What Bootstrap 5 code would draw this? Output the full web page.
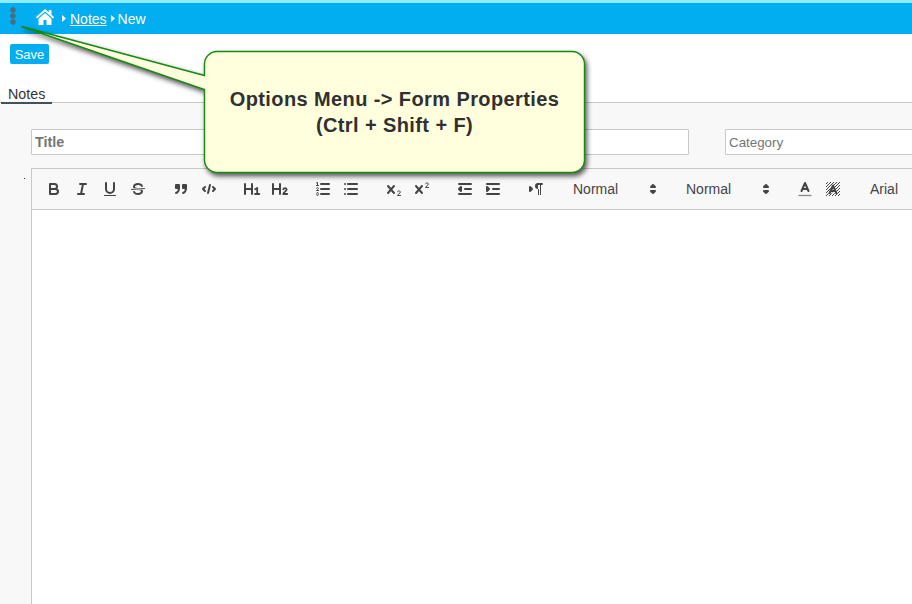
<!DOCTYPE html>
<html lang="en">
<head>
<meta charset="utf-8">
<title>Notes - New</title>
<link href="https://cdn.jsdelivr.net/npm/bootstrap@5.3.0/dist/css/bootstrap.min.css" rel="stylesheet">
<style>
html, body { height: 604px; overflow: hidden; }
body { font-family: "Liberation Sans", Arial, sans-serif; font-size: 14px; line-height: 16px; background: #fff; color: #333; width: 912px; }
.top-bar { height: 34px; background: #02aef0; border-top: 3px solid #8cebfd; padding-left: 9px; color: #fff; }
.top-bar a { color: #fff; }
.dots { width: 8px; height: 18px; margin-top: -5px; }
.house { width: 20px; height: 18px; margin: -3px 0 0 18px; }
.caret-ico { width: 4px; height: 7px; }
.action-row { height: 50px; padding: 10px 0 0 10px; }
.btn-save { width: 39px; height: 20px; padding: 0; font-size: 13px; line-height: 19px; border: 0; border-radius: 2px; background: #02aef0; color: #fff; }
.btn-save:hover { background: #0299d4; color: #fff; }
.tab-strip { height: 19px; border-bottom: 1px solid #c9c9c9; padding-left: 1px; }
.tab-strip .nav-link { width: 51px; height: 20px; padding: 2px 0 0 7px; border-bottom: 2px solid #42525c; color: #333; line-height: 16px; font-size: 14.3px; }
.form-area { height: 501px; background: #f8f8f9; padding: 26px 0 0 31px; }
.field-row { gap: 36px; }
.field-row .form-control { height: 26px; padding: 0 3px; border: 1px solid #c8c8c8; border-radius: 1px; font-size: 13.33px; line-height: 24px; background: #fff; }
.field-row .form-control::placeholder { color: #757575; opacity: 1; }
.field-row .title-in { width: 658px; font-size: 14.4px; font-weight: bold; }
.field-row .cat-in { width: 220px; }
.editor { margin-top: 13px; width: 940px; height: 460px; border: 1px solid #c8c8c8; background: #fff; }
.tools { height: 41px; padding: 0 8px; gap: 15px; background: #f8f8f9; border-bottom: 1px solid #c8c8c8; color: #444; }
.tool { width: 28px; height: 24px; padding: 3px 5px; border: 0; background: none; color: #444; display: block; }
.tool svg, .pick svg { width: 18px; height: 18px; display: block; }
.pick { width: 98px; height: 24px; padding: 0 1px 0 8px; line-height: 24px; }
.s { fill: none; stroke: #444; stroke-width: 2; stroke-linecap: round; stroke-linejoin: round; }
.f { fill: #444; }
.thin { stroke-width: 1; }
.stray { position: absolute; left: 24px; top: 178px; width: 1px; height: 1px; background: #333; }
.callout { position: absolute; left: 0; top: 0; width: 620px; height: 200px; pointer-events: none; }
.callout svg { position: absolute; inset: 0; }
.callout-text { position: absolute; left: 205px; top: 86px; width: 379px; font-size: 20px; line-height: 26px; letter-spacing: .4px; font-weight: bold; color: #303030; white-space: nowrap; }
</style>
<script src="https://cdn.jsdelivr.net/npm/bootstrap@5.3.0/dist/js/bootstrap.bundle.min.js"></script>
</head>
<body class="position-relative">
<header class="top-bar d-flex align-items-center">
  <svg class="dots" viewBox="0 0 8 18"><g fill="#496b7a"><circle cx="4" cy="3" r="2.7"/><circle cx="4" cy="9" r="2.7"/><circle cx="4" cy="15" r="2.7"/></g></svg>
  <svg class="house" viewBox="0 0 20 18"><path fill="#fff" d="M10 1 .8 9.3 2 10.6 10 3.5l8 7.100 1.200-1.300-2.700-2.500V2h-2.700v2.300zM10 5l-6.500 5.700V17h5v-5h3v5h5v-6.300z"/></svg>
  <svg class="caret-ico" style="margin-left:7px" viewBox="0 0 4 7"><path fill="#fff" d="M0 0l4 3.500-4 3.500z"/></svg>
  <a href="#" class="ms-1 text-decoration-underline">Notes</a>
  <svg class="caret-ico" style="margin-left:4px" viewBox="0 0 4 7"><path fill="#fff" d="M0 0l4 3.500-4 3.500z"/></svg>
  <span style="margin-left:3px">New</span>
</header>
<div class="action-row"><button class="btn btn-save d-block">Save</button></div>
<nav class="nav tab-strip"><a class="nav-link" href="#">Notes</a></nav>
<main class="form-area">
  <div class="field-row d-flex">
    <input class="form-control title-in flex-shrink-0" placeholder="Title">
    <input class="form-control cat-in flex-shrink-0" placeholder="Category">
  </div>
  <div class="editor">
    <div class="tools d-flex align-items-center">
      <div class="d-flex">
        <button class="tool"><svg viewBox="0 0 18 18"><path class="s" d="M5 4H9.500a2.500 2.500 0 0 1 0 5H5zM5 9h5.500a2.500 2.500 0 0 1 0 5H5z"/></svg></button>
        <button class="tool"><svg viewBox="0 0 18 18"><path class="s" d="M7 4h6M5 14h6M8 14l2-10"/></svg></button>
        <button class="tool"><svg viewBox="0 0 18 18"><path class="s" d="M5 3v6a4 4 0 0 0 8 0V3"/><rect class="f" x="3" y="15" width="12" height="1"/></svg></button>
        <button class="tool"><svg viewBox="0 0 18 18"><path class="s thin" d="M15.500 8.500l-13 1"/><path class="f" d="M9.007,8C6.542,7.791,6,7.519,6,6.500,6,5.792,7.283,5,9,5c1.571,0,2.765.679,2.969,1.309a1,1,0,0,0,1.900-.617C13.356,4.106,11.354,3,9,3,6.200,3,4,4.538,4,6.500a3.200,3.200,0,0,0,.5,1.843Z"/><path class="f" d="M8.984,10C11.457,10.208,12,10.479,12,11.500c0,.708-1.283,1.500-3,1.500-1.571,0-2.765-.679-2.969-1.309a1,1,0,1,0-1.900.617C4.644,13.894,6.646,15,9,15c2.800,0,5-1.538,5-3.500a3.200,3.200,0,0,0-.5-1.843Z"/></svg></button>
      </div>
      <div class="d-flex">
        <button class="tool"><svg viewBox="0 0 18 18"><path class="s f" style="fill:#444" d="M4 5h3v3H4zM11 5h3v3h-3z"/><path class="s" d="M7 8c0 4.031-3 5-3 5M14 8c0 4.031-3 5-3 5"/></svg></button>
        <button class="tool"><svg viewBox="0 0 18 18"><path class="s" d="M5 7L3 9l2 2M13 7l2 2-2 2M10 5L8 13"/></svg></button>
      </div>
      <div class="d-flex">
        <button class="tool"><svg viewBox="0 0 18 18"><path class="s" d="M2 4v10M9 4v10M2 9h7"/><path class="s" stroke-linecap="butt" style="stroke-width:1.800" d="M12.200 9.300l2-1.300v6M12 14h4.300"/></svg></button>
        <button class="tool"><svg viewBox="0 0 18 18"><path class="s" d="M2 4v10M9 4v10M2 9h7"/><path class="s" style="stroke-width:1.800" d="M12.300 9.300c.4-1.700 3.400-1.700 3.400.2 0 1.700-3.200 2.500-3.500 4.500h4"/></svg></button>
      </div>
      <div class="d-flex">
        <button class="tool"><svg viewBox="0 0 18 18"><path class="s" d="M7 4h8M7 9h8M7 14h8"/><path class="s thin" d="M2.500 2.800l1-.4V5.500M2.500 5.500h2M4.500 10.500h-2c0-.234 1.850-1.076 1.850-2.234A.959.959 0 0 0 2.500 8.156M2.500 14.846a.959.959 0 0 0 1.850-.109A.7.7 0 0 0 3.750 14a.688.688 0 0 0 .6-.736.959.959 0 0 0-1.850-.109"/></svg></button>
        <button class="tool"><svg viewBox="0 0 18 18"><path class="s" d="M6 4h9M6 9h9M6 14h9M3 4h.01M3 9h.01M3 14h.01"/></svg></button>
      </div>
      <div class="d-flex">
        <button class="tool"><svg viewBox="0 0 18 18"><path class="s" d="M3 6l6 7M9 6l-6 7"/><path class="s thin" d="M12.500 11.800c.4-1.400 2.800-1.300 2.800.3 0 1.500-2.600 1.900-2.800 3.400h3"/></svg></button>
        <button class="tool"><svg viewBox="0 0 18 18"><path class="s" d="M3 6l6 7M9 6l-6 7"/><path class="s thin" d="M12.500 3.800c.4-1.400 2.800-1.300 2.800.3 0 1.500-2.600 1.900-2.800 3.400h3"/></svg></button>
      </div>
      <div class="d-flex">
        <button class="tool"><svg viewBox="0 0 18 18"><path class="s" d="M3 14h12M3 4h12M9 9h6M5 7v4L3 9z"/></svg></button>
        <button class="tool"><svg viewBox="0 0 18 18"><path class="s" d="M3 14h12M3 4h12M9 9h6M3 7v4l2-2z"/></svg></button>
      </div>
      <button class="tool flex-shrink-0"><svg viewBox="0 0 18 18"><path class="s" d="M3 7v4l2-2zM15 4h-4"/><path class="f" d="M11 3a3 3 0 0 0 0 6h1V3zM11 4h1v11h-1zM13 4h1v11h-1z"/></svg></button>
      <div class="pick d-flex align-items-center justify-content-between flex-shrink-0"><span>Normal</span><svg viewBox="0 0 18 18"><path class="s" d="M7 11l2 2 2-2zM7 7l2-2 2 2z"/></svg></div>
      <div class="pick d-flex align-items-center justify-content-between flex-shrink-0"><span>Normal</span><svg viewBox="0 0 18 18"><path class="s" d="M7 11l2 2 2-2zM7 7l2-2 2 2z"/></svg></div>
      <div class="d-flex">
        <button class="tool"><svg viewBox="0 0 18 18"><path d="M2.500 15.500h13" stroke="#888" stroke-width="1.300"/><path class="s" d="M5.500 11L9 3l3.500 8M11.630 9H6.380"/></svg></button>
        <button class="tool"><svg viewBox="0 0 18 18"><defs><pattern id="hatch" width="3" height="3" patternUnits="userSpaceOnUse"><path fill="#444" d="M2 0h1v1H2zM1 1h1v1H1zM0 2h1v1H0z"/></pattern></defs><path fill="url(#hatch)" d="M2 2h14v14H2z"/><path d="M9 4l4.500 9.500h-9z" fill="#f8f8f9" opacity=".65"/><path class="s" d="M5.700 13L9 5.500l3.300 7.500M11.200 11H6.800"/></svg></button>
      </div>
      <div class="pick flex-shrink-0">Arial</div>
    </div>
  </div>
</main>
<span class="stray"></span>
<div class="callout">
  <svg width="620" height="200" viewBox="0 0 620 200">
    <path d="M217 51.500H572a12.500 12.500 0 0 1 12.500 12.500V160a12.500 12.500 0 0 1-12.500 12.500H217a12.500 12.500 0 0 1-12.500-12.500V89.500L21.500 26.500 204.500 75.500V64A12.500 12.500 0 0 1 217 51.500z" fill="#ffffde" stroke="#148a14" stroke-width="1.400" style="filter:drop-shadow(2px 3px 2.500px rgba(0,0,0,.65))"/>
  </svg>
  <div class="callout-text text-center">Options Menu -&gt; Form Properties<br>(Ctrl + Shift + F)</div>
</div>
</body>
</html>
